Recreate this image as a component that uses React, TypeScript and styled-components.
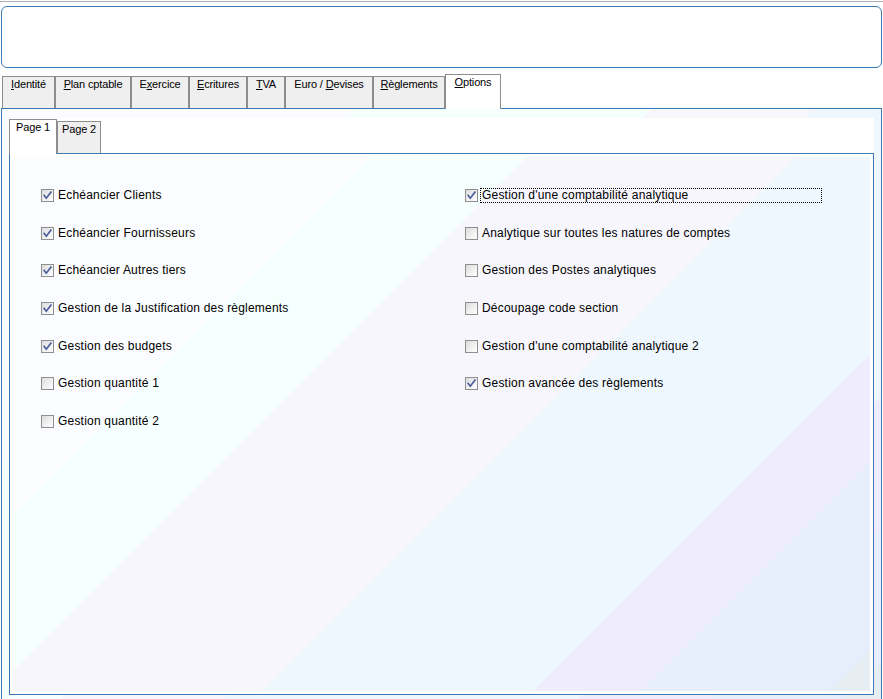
import React from 'react';
import styled, { createGlobalStyle } from 'styled-components';

const GlobalStyle = createGlobalStyle`
    html, body {
        margin: 0;
        padding: 0;
        background: #ffffff;
        overflow: hidden;
    }
    body {
        font-family: "Liberation Sans", Arial, sans-serif;
        color: #000;
    }
`

const outerTabs = [
    { label: 'Identité', mn: 0, width: 53 },
    { label: 'Plan cptable', mn: 0, width: 76 },
    { label: 'Exercice', mn: 1, width: 58 },
    { label: 'Ecritures', mn: 0, width: 58 },
    { label: 'TVA', mn: 0, width: 38 },
    { label: 'Euro / Devises', mn: 7, width: 88 },
    { label: 'Règlements', mn: 0, width: 72 },
    { label: 'Options', mn: 0, width: 56, active: true },
]

const innerTabs = [
    { label: 'Page 1', width: 48, active: true },
    { label: 'Page 2', width: 44 },
]

const leftOptions = [
    { label: 'Echéancier Clients', checked: true },
    { label: 'Echéancier Fournisseurs', checked: true },
    { label: 'Echéancier Autres tiers', checked: true },
    { label: 'Gestion de la Justification des règlements', checked: true },
    { label: 'Gestion des budgets', checked: true },
    { label: 'Gestion quantité 1', checked: false },
    { label: 'Gestion quantité 2', checked: false },
]

const rightOptions = [
    { label: "Gestion d'une comptabilité analytique", checked: true, focused: true },
    { label: 'Analytique sur toutes les natures de comptes', checked: false },
    { label: 'Gestion des Postes analytiques', checked: false },
    { label: 'Découpage code section', checked: false },
    { label: "Gestion d'une comptabilité analytique 2", checked: false },
    { label: 'Gestion avancée des règlements', checked: true },
]

const Mnemonic = ({ text, idx }: { text: string, idx: number }) => (
    <>
        {text.slice(0, idx)}<u>{text.charAt(idx)}</u>{text.slice(idx + 1)}
    </>
)

const CheckBox = ({ checked }: { checked: boolean }) => (
    <StyledBox>
        {
            checked &&
            <svg width="11" height="11" viewBox="0 0 11 11">
                <path d="M2.2 5.4 L4.3 8.2 L8.9 2.2" fill="none" stroke="#4b5c9c" strokeWidth="1.7" strokeLinecap="square" />
            </svg>
        }
    </StyledBox>
)

const OptionItem = ({ label, checked, focused }: { label: string, checked: boolean, focused?: boolean }) => (
    <StyledOption>
        <CheckBox checked={ checked } />
        <StyledOptionLabel $focused={ !!focused }>{ label }</StyledOptionLabel>
    </StyledOption>
)

const App = () => {
    const rows = Math.max(leftOptions.length, rightOptions.length)
    const cells = []
    for (let i = 0; i < rows; i++) {
        cells.push(leftOptions[i] ? <OptionItem key={ 'l' + i } { ...leftOptions[i] } /> : <span key={ 'l' + i } />)
        cells.push(rightOptions[i] ? <OptionItem key={ 'r' + i } { ...rightOptions[i] } /> : <span key={ 'r' + i } />)
    }

    return (
        <StyledPage>
            <GlobalStyle />
            <StyledTopRule />
            <StyledHeaderBox />
            <StyledTabStrip>
                {
                    outerTabs.map((t, idx) => (
                        <StyledTab key={ idx } $active={ !!t.active } $width={ t.width }>
                            <Mnemonic text={ t.label } idx={ t.mn } />
                        </StyledTab>
                    ))
                }
            </StyledTabStrip>
            <StyledOuterPanel>
                <StyledInnerStrip>
                    {
                        innerTabs.map((t, idx) => (
                            <StyledInnerTab key={ idx } $active={ !!t.active } $width={ t.width }>
                                { t.label }
                            </StyledInnerTab>
                        ))
                    }
                </StyledInnerStrip>
                <StyledInnerPanel>
                    <StyledContent>
                        { cells }
                    </StyledContent>
                </StyledInnerPanel>
            </StyledOuterPanel>
        </StyledPage>
    )
}

const StyledPage = styled.div`
    width: 883px;
    height: 699px;
    overflow: hidden;
    padding-top: 1px;
    box-sizing: border-box;
`

const StyledTopRule = styled.div`
    height: 1px;
    background: #acacac;
`

const StyledHeaderBox = styled.div`
    margin: 4px 0 0 1px;
    width: 881px;
    height: 62px;
    box-sizing: border-box;
    border: 1px solid #3d7ab3;
    border-radius: 6px;
    background: #fff;
`

const StyledTabStrip = styled.div`
    display: flex;
    align-items: flex-end;
    height: 35px;
    margin-top: 5px;
    padding-left: 2px;
    position: relative;
    z-index: 2;
`

const StyledTab = styled.div<{ $active: boolean, $width: number }>`
    width: ${p => p.$width}px;
    height: ${p => p.$active ? 35 : 32}px;
    margin-bottom: ${p => p.$active ? -1 : 0}px;
    box-sizing: border-box;
    border: 1px solid #8d8d8d;
    border-bottom: none;
    background: ${p => p.$active ? '#ffffff' : '#efefef'};
    font-size: 11px;
    line-height: 13px;
    letter-spacing: -0.15px;
    padding-top: 1px;
    text-align: center;
    white-space: nowrap;
    u {
        text-decoration: underline;
        text-underline-offset: 1px;
    }
`

const StyledOuterPanel = styled.div`
    margin-left: 1px;
    width: 881px;
    height: 600px;
    box-sizing: border-box;
    border: 1px solid #3d7ab3;
    padding: 9px 7px 0;
    background: linear-gradient(135deg,
        #fbfcff 0%, #fbfcff 24%,
        #f5fffe 24%, #f5fffe 44%,
        #f7f6fd 44%, #f7f6fd 55%,
        #eef6fe 55%, #eef6fe 79%,
        #efedfd 79%, #efedfd 88%,
        #e6eefc 88%, #e6eefc 97%,
        #e6eef4 97%);
`

const StyledInnerStrip = styled.div`
    display: flex;
    align-items: flex-end;
    height: 35px;
    background: #fff;
    position: relative;
    z-index: 2;
`

const StyledInnerTab = styled.div<{ $active: boolean, $width: number }>`
    width: ${p => p.$width}px;
    height: ${p => p.$active ? 35 : 32}px;
    margin-bottom: ${p => p.$active ? -1 : 0}px;
    box-sizing: border-box;
    border: 1px solid #8d8d8d;
    border-bottom: none;
    background: ${p => p.$active ? '#ffffff' : '#efefef'};
    font-size: 11px;
    line-height: 13px;
    letter-spacing: -0.15px;
    padding-top: 1px;
    text-align: center;
    white-space: nowrap;
`

const StyledInnerPanel = styled.div`
    height: 542px;
    box-sizing: border-box;
    border: 1px solid #3d7ab3;
    padding: 3px;
    background: #fff;
`

const StyledContent = styled.div`
    height: 100%;
    box-sizing: border-box;
    padding: 31px 0 0 28px;
    display: grid;
    grid-template-columns: 424px 1fr;
    grid-auto-rows: 37.67px;
    align-content: start;
    background: linear-gradient(135deg,
        #fbfcff 0%, #fbfcff 25.8%,
        #f5fffe 25.8%, #f5fffe 36.9%,
        #f7f6fd 36.9%, #f7f6fd 56.3%,
        #eef6fe 56.3%, #eef6fe 75.8%,
        #efedfd 75.8%, #efedfd 83.5%,
        #e6eefc 83.5%, #e6eefc 97.1%,
        #e6eef4 97.1%);
`

const StyledOption = styled.div`
    display: flex;
    align-items: center;
    height: 15px;
    gap: 2px;
    align-self: start;
`

const StyledBox = styled.span`
    width: 13px;
    height: 13px;
    box-sizing: border-box;
    border: 1px solid #8e8f8f;
    background: linear-gradient(135deg, #dcdcdc 0%, #f2f2f2 60%, #fdfdfd 100%);
    display: flex;
    align-items: center;
    justify-content: center;
    flex-shrink: 0;
    svg {
        display: block;
    }
`

const StyledOptionLabel = styled.span<{ $focused: boolean }>`
    box-sizing: border-box;
    height: 15px;
    width: ${p => p.$focused ? '342px' : 'auto'};
    border: 1px ${p => p.$focused ? 'dotted #000' : 'solid transparent'};
    padding: 0 1px;
    font-size: 12px;
    line-height: 13px;
    letter-spacing: 0.2px;
    white-space: nowrap;
`

export default App
